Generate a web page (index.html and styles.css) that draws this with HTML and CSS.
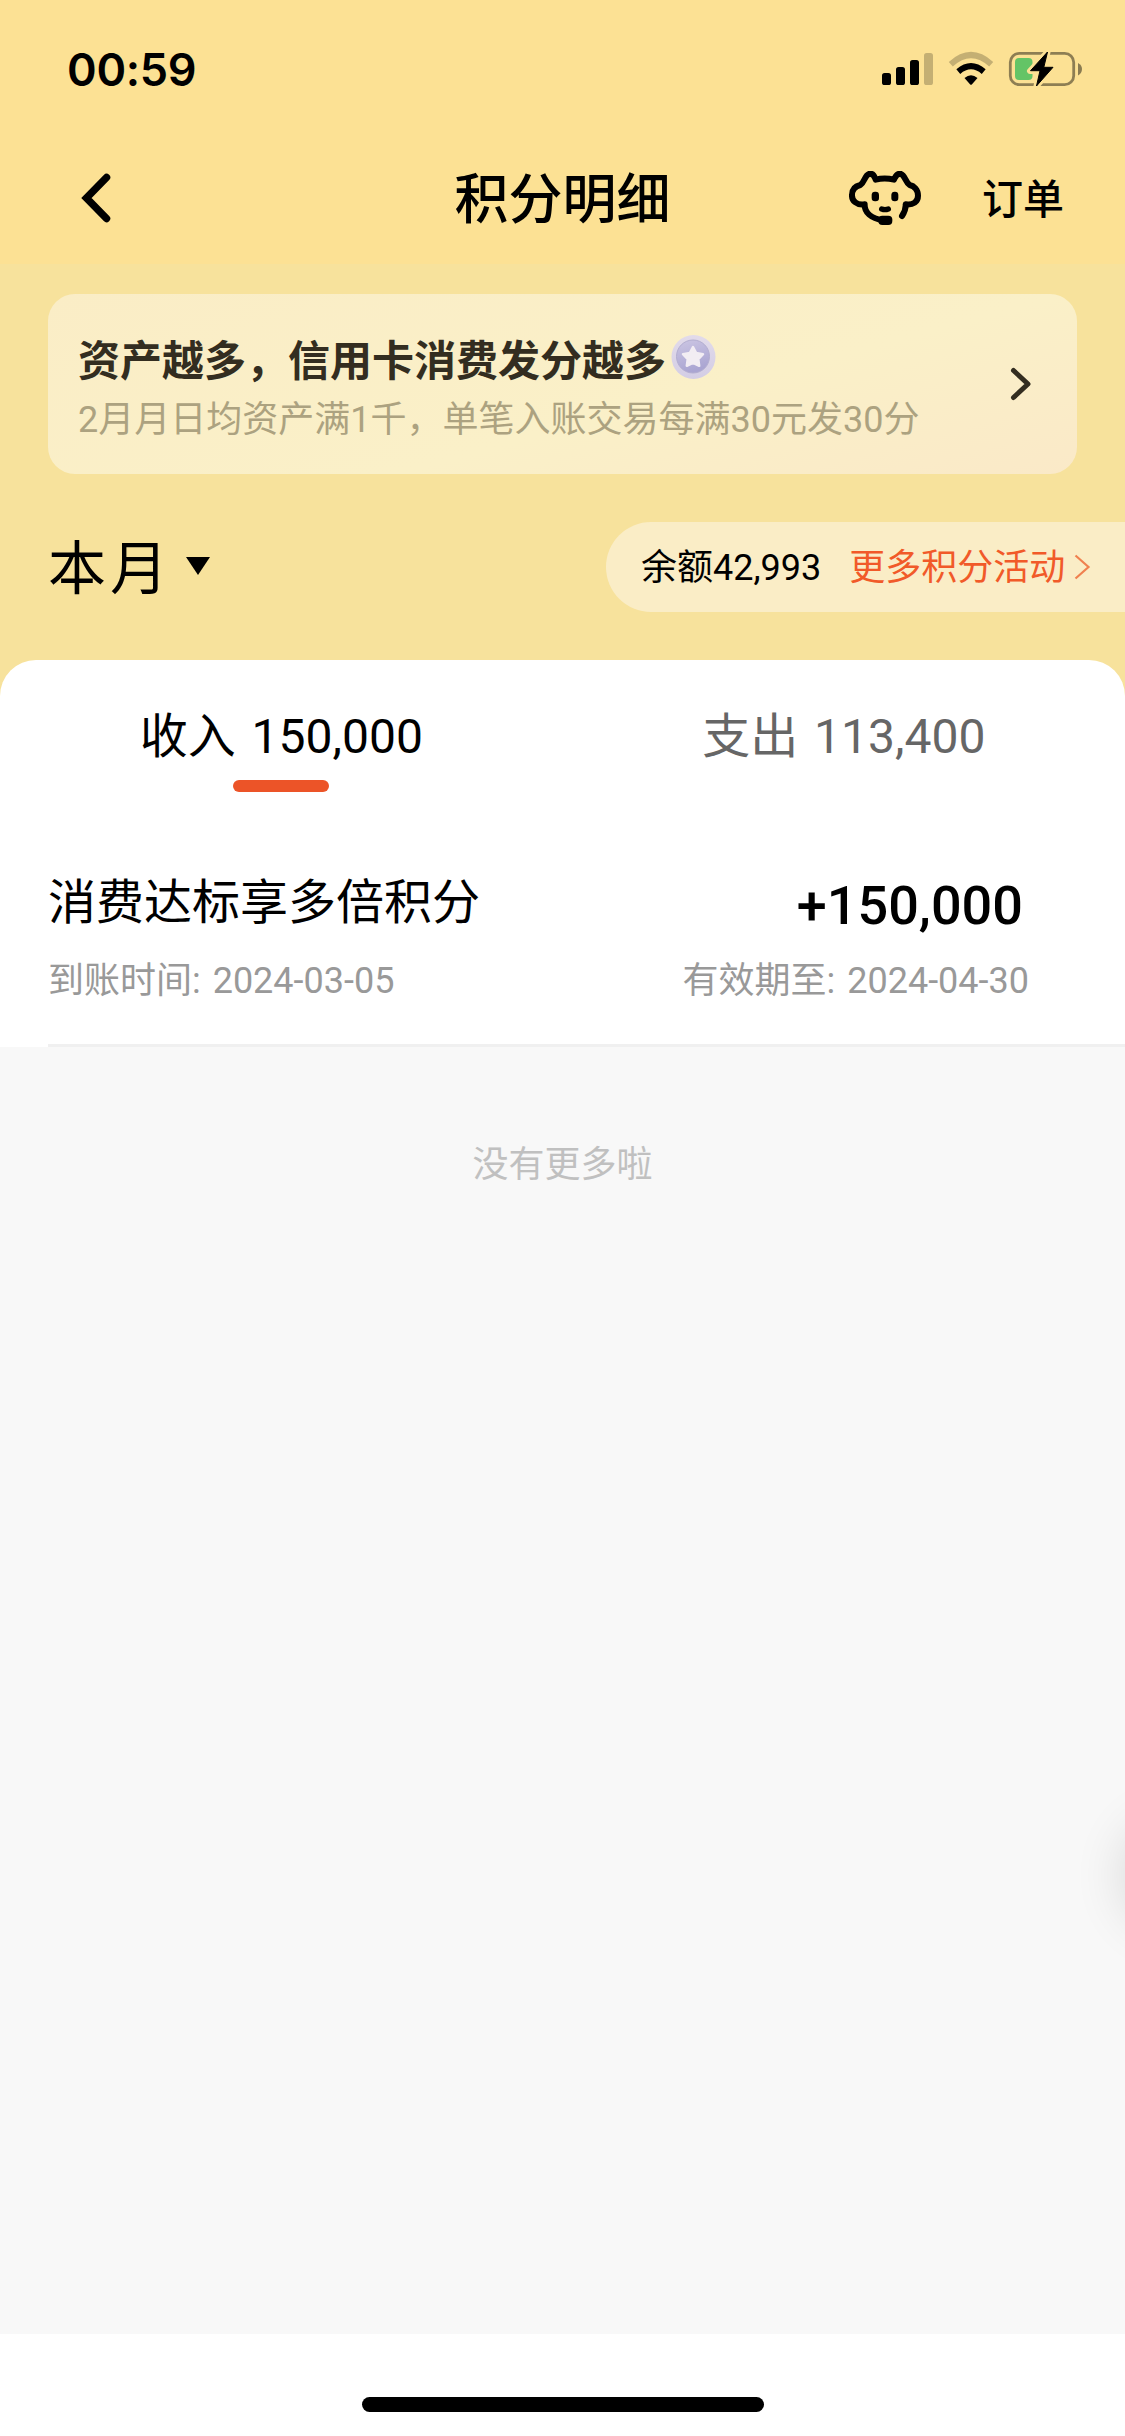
FILE: index.html
```html
<!DOCTYPE html>
<html lang="zh-CN">
<head>
<meta charset="utf-8">
<title>积分明细</title>
<link rel="stylesheet" href="styles.css">
</head>
<body>
<div class="screen">
  <header class="top">
    <div class="status">
      <span class="clock">00:59</span>
      <svg class="status-icons" viewBox="880 50 204 38" width="204" height="38">
        <rect x="882" y="73" width="9" height="12" rx="2.6"/>
        <rect x="896" y="67" width="9" height="18" rx="2.6"/>
        <rect x="910" y="60" width="9" height="25" rx="2.6"/>
        <rect x="924" y="53" width="9" height="32" rx="2.6" opacity=".22"/>
        <path d="M950.800 64.200Q971 45.800 991.200 64.200" fill="none" stroke="#000" stroke-width="6" opacity=".22"/>
        <path d="M958.300 71.600Q971 60.800 983.700 71.600" fill="none" stroke="#000" stroke-width="6"/>
        <path d="M964.500 78Q971 72.500 977.500 78L972 84.200Q971 85.200 970 84.200Z"/>
        <rect x="1010.300" y="53.300" width="63.400" height="31.400" rx="9" fill="none" stroke="#000" stroke-opacity=".44" stroke-width="2.800"/>
        <path d="M1078 63Q1082 65 1082 69T1078 75.500Z" opacity=".45"/>
        <rect x="1015" y="58" width="17.500" height="22" rx="4" fill="#64c466"/>
        <path d="M1047.500 52L1030 71H1039.500L1036.500 86L1053 67.300H1043.800Z" stroke="#fce194" stroke-width="6" stroke-linejoin="round"/>
        <path d="M1047.500 52L1030.500 70.700H1040L1036.500 86L1053 67.300H1043.800Z" stroke="#000" stroke-width="1" stroke-linejoin="round"/>
      </svg>
    </div>
    <nav class="nav">
      <svg class="back" viewBox="0 0 30 50" width="30" height="50"><path d="M25.500 4.500L5.500 25L25.500 45.500" fill="none" stroke="#000" stroke-width="7.500" stroke-linecap="round" stroke-linejoin="miter"/></svg>
      <h1 class="nav-title">积分明细</h1>
      <div class="nav-actions">
        <svg viewBox="57 423 216 162" width="72" height="54" fill="none" stroke="#000" stroke-width="18" stroke-linecap="round" stroke-linejoin="round">
          <path d="M160 571C122 565 103 547 104 523C80 527 65 512 66 495C66 477 78 468 91 465C105 456 104 433 120 431C131 431 133 439 137 449C155 444 173 444 192 449C197 439 199 431 210 431C225 433 225 456 239 465C252 468 264 479 264 497C264 515 250 526 227 523C228 539 222 549 216 558"/>
          <g fill="#000" stroke="none"><rect x="125" y="485" width="22" height="29" rx="10"/><rect x="184" y="485" width="21" height="29" rx="10"/><rect x="145" y="557" width="42" height="28" rx="12"/></g>
          <path d="M155 537Q165 541 175 537" stroke-width="16"/>
        </svg>
        <a class="orders">订单</a>
      </div>
    </nav>
  </header>

  <section class="hero">
    <div class="promo">
      <div class="promo-text">
        <div class="promo-title"><span>资产越多，信用卡消费发分越多</span>
          <svg viewBox="0 0 46 46" width="46" height="46">
            <defs><linearGradient id="rim" x1="0" y1="0" x2="0" y2="1"><stop offset="0" stop-color="#e2dbea"/><stop offset="1" stop-color="#d3cde5"/></linearGradient>
            <linearGradient id="coin" x1="0" y1="0" x2=".3" y2="1"><stop offset="0" stop-color="#ccc6e3"/><stop offset="1" stop-color="#aaa5d2"/></linearGradient></defs>
            <circle cx="22.500" cy="23" r="22" fill="url(#rim)"/>
            <circle cx="22" cy="22.500" r="16.500" fill="url(#coin)" stroke="#b3aed0" stroke-width="1"/>
            <path d="M22 13L25.200 19L32 20.200L27.300 25.100L28.200 31.800L22 28.900L15.800 31.800L16.700 25.100L12 20.200L18.800 19Z" fill="#f2edf3" stroke="#f2edf3" stroke-width="2.500" stroke-linejoin="round"/>
          </svg>
        </div>
        <p class="promo-sub">2月月日均资产满1千，单笔入账交易每满30元发30分</p>
      </div>
      <svg class="promo-go" viewBox="0 0 22 34" width="22" height="34"><path d="M3.500 3.500L18 17L3.500 30.500" fill="none" stroke="#332d20" stroke-width="5" stroke-linecap="round" stroke-linejoin="round"/></svg>
    </div>
    <div class="filter">
      <div class="month"><span>本月</span><svg viewBox="0 0 24 18" width="24" height="18"><path d="M0 0H24L12 18Z"/></svg></div>
      <div class="balance"><span>余额42,993</span><a class="more">更多积分活动</a><svg viewBox="0 0 17 26" width="17" height="26"><path d="M1.500 1.500L14.500 13L1.500 24.500" fill="none" stroke="#f0814f" stroke-width="2.200"/></svg></div>
    </div>
  </section>

  <main class="sheet">
    <div class="tabs">
      <div class="tab active">收入 150,000</div>
      <div class="tab">支出 113,400</div>
    </div>
    <article class="entry">
      <div class="row"><span class="name">消费达标享多倍积分</span><strong class="amount">+150,000</strong></div>
      <div class="row meta"><span>到账时间: 2024-03-05</span><span>有效期至: 2024-04-30</span></div>
    </article>
  </main>
  <div class="rest">
    <p>没有更多啦</p>
    <i class="float-shadow"></i>
  </div>
  <footer class="home"><i></i></footer>
</div>
</body>
</html>
```
FILE: styles.css
```css
* { box-sizing: border-box; }
body, h1, p { margin: 0; font-weight: 400; }
body {
  background: #fff;
  color: #000;
  font-family: Roboto, "Noto Sans CJK SC", sans-serif;
}
svg { display: block; flex: none; }
.screen {
  width: 1125px;
  height: 2436px;
  display: flex;
  flex-direction: column;
  overflow: hidden;
}
.top { height: 264px; background: #fce194; }
.status {
  height: 132px;
  padding: 0 41px 0 67px;
  display: flex;
  justify-content: space-between;
  align-items: center;
}
.clock {
  font: 600 45px/60px Inter, sans-serif;
  letter-spacing: -.3px;
  padding-top: 7px;
}
.status-icons { margin-top: 6px; }
.nav {
  height: 132px;
  padding: 0 61px 0 81px;
  display: grid;
  grid-template-columns: 1fr auto 1fr;
  align-items: center;
}
.nav-title { font-size: 54px; line-height: 72px; font-weight: 500; margin: 6px 0 0 -20px; }
.nav-actions { display: flex; justify-content: flex-end; align-items: center; gap: 61px; }
.orders { font-size: 41px; line-height: 60px; font-weight: 500; padding-top: 3px; }

.hero {
  height: 432px;
  margin-bottom: -36px;
  padding-top: 30px;
  background: #f7e29c;
}
.promo {
  height: 180px;
  margin: 0 48px;
  padding: 36px 45px 0 30px;
  border-radius: 27px;
  background: linear-gradient(165deg, #faedc6 0%, #faf0c8 60%, #fae9c8 100%);
  display: flex;
  justify-content: space-between;
}
.promo-title {
  display: flex;
  align-items: center;
  gap: 5px;
  height: 54px;
  color: #332d20;
  font-size: 42px;
  font-weight: 700;
  white-space: nowrap;
}
.promo-title svg { margin-top: -1px; }
.promo-sub { font-size: 36px; line-height: 54px; margin-top: 9px; color: #aca280; }
.promo-go { margin-top: 37px; }
.filter {
  display: flex;
  justify-content: space-between;
  align-items: center;
  margin-top: 48px;
  padding-left: 48px;
}
.month { display: flex; align-items: center; gap: 14px; height: 90px; font-size: 58px; letter-spacing: 4px; }
.month span { padding-bottom: 7px; }
.month svg { margin-top: -2px; }
.balance {
  width: 519px;
  height: 90px;
  padding-left: 35px;
  border-radius: 45px 0 0 45px;
  background: #faedc6;
  display: flex;
  align-items: center;
  font-size: 36px;
}
.balance span, .balance a { padding-bottom: 6px; }
.more { margin: 0 9px 0 28px; color: #f15a29; }

.sheet {
  height: 387px;
  background: #fff;
  border-radius: 36px 36px 0 0;
}
.tabs { display: grid; grid-template-columns: 1fr 1fr; height: 132px; }
.tab {
  display: flex;
  flex-direction: column;
  align-items: center;
  padding-top: 44px;
  font-size: 48px;
  line-height: 66px;
  word-spacing: 4px;
  color: #666;
}
.tab.active { color: #000; }
.tab.active::after {
  content: "";
  width: 96px;
  height: 12px;
  margin-top: 10px;
  border-radius: 6px;
  background: #ec5428;
}
.entry {
  margin-left: 48px;
  height: 255px;
  padding: 74px 96px 0 0;
  border-bottom: 3px solid #f0f0f0;
}
.row { display: flex; justify-content: space-between; align-items: center; height: 72px; }
.name { font-size: 48px; padding-bottom: 8px; }
.amount { font-size: 54px; font-weight: 500; margin: 7px 6px 0 0; }
.meta { height: 54px; margin-top: 12px; font-size: 36px; word-spacing: 3px; color: #999; }

.rest {
  position: relative;
  flex: 1;
  overflow: hidden;
  background: #f8f8f8;
  padding-top: 91px;
  text-align: center;
  font-size: 36px;
  line-height: 54px;
  color: #c0c0c0;
}
.float-shadow {
  position: absolute;
  top: 778px;
  right: -104px;
  width: 100px;
  height: 100px;
  border-radius: 50%;
  box-shadow: 0 0 50px 8px rgba(0, 0, 0, .12);
}
.home { height: 102px; padding-top: 63px; background: #fff; }
.home i { display: block; width: 402px; height: 15px; margin: 0 auto; border-radius: 8px; background: #000; }
```
